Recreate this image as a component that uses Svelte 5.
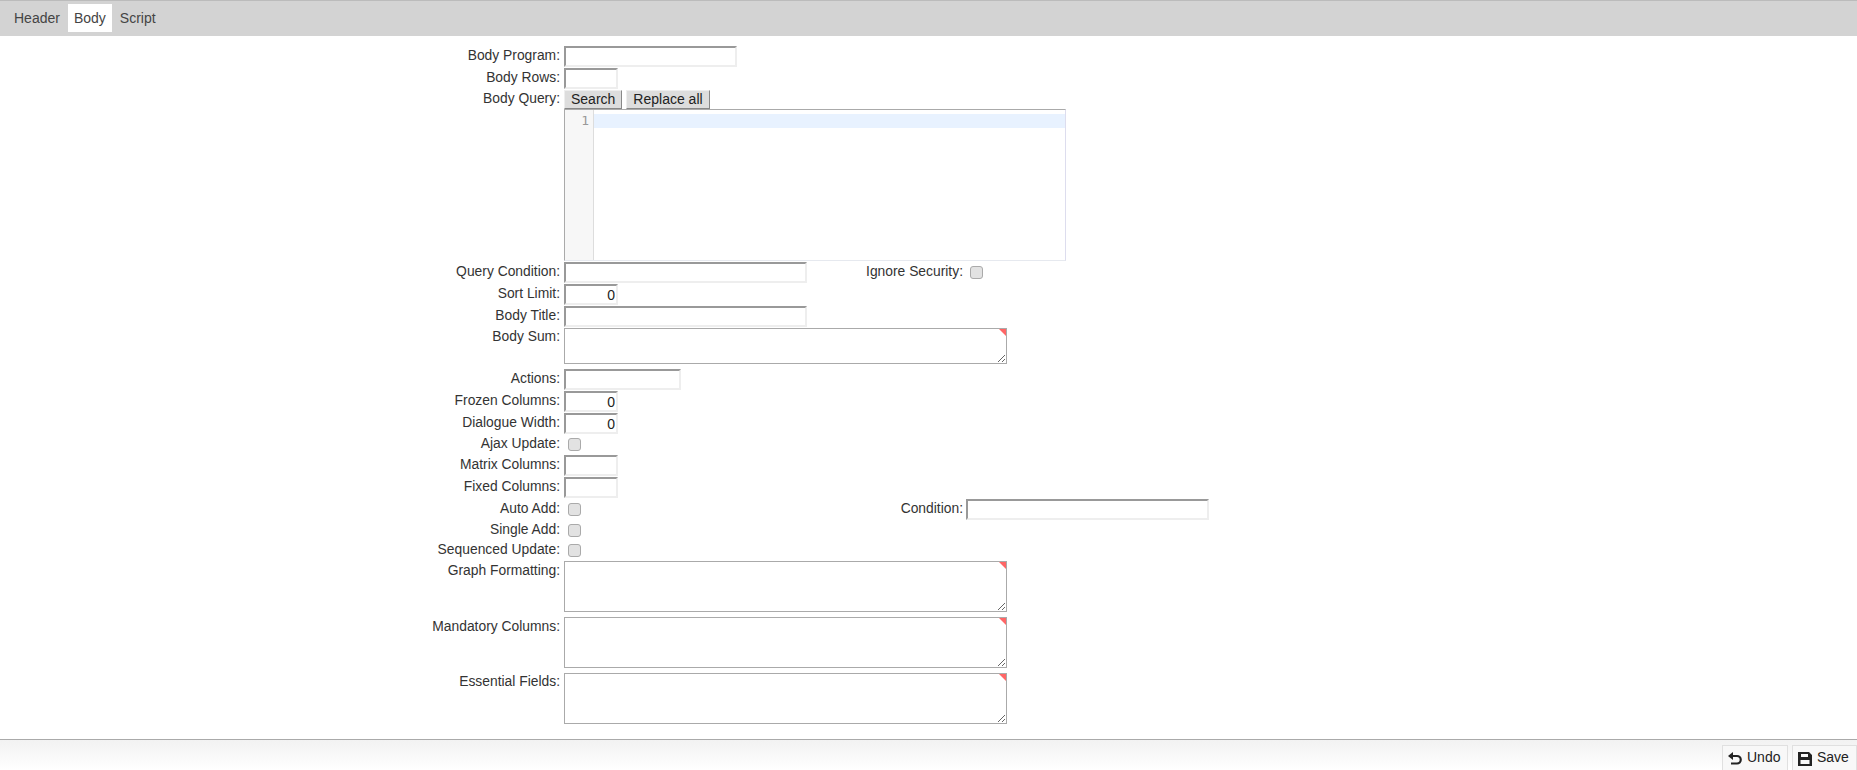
<script>
  let tabs = ["Header", "Body", "Script"];
  let activeTab = "Body";
</script>

<div class="page">
  <div class="tabs">
    {#each tabs as tab}
      <button class="tab" class:active={tab === activeTab} onclick={() => (activeTab = tab)}>{tab}</button>
    {/each}
  </div>

  <div class="form">
    <div class="row"><label for="prog">Body Program:</label><input id="prog" class="w173" /></div>
    <div class="row"><label for="rows">Body Rows:</label><input id="rows" class="w54" /></div>
    <div class="row query">
      <label for="query">Body Query:</label>
      <div class="query-field">
        <div class="query-tools">
          <button class="tool">Search</button>
          <button class="tool">Replace all</button>
        </div>
        <div class="editor" id="query">
          <div class="gutter"><span>1</span></div>
          <div class="lines"><div class="active-line"></div></div>
        </div>
      </div>
    </div>
    <div class="row">
      <label for="cond">Query Condition:</label><input id="cond" class="w243" />
      <span class="side-label ignore">Ignore Security:</span><input type="checkbox" class="side-check" />
    </div>
    <div class="row"><label for="sort">Sort Limit:</label><input id="sort" class="w54 num" value="0" /></div>
    <div class="row"><label for="title">Body Title:</label><input id="title" class="w243" /></div>
    <div class="row area">
      <label for="sum">Body Sum:</label>
      <div class="area-wrap"><textarea id="sum" class="h36"></textarea><i class="corner"></i></div>
    </div>
    <div class="row"><label for="actions">Actions:</label><input id="actions" class="w117" /></div>
    <div class="row"><label for="frozen">Frozen Columns:</label><input id="frozen" class="w54 num" value="0" /></div>
    <div class="row"><label for="width">Dialogue Width:</label><input id="width" class="w54 num" value="0" /></div>
    <div class="row check"><label for="ajax">Ajax Update:</label><input id="ajax" type="checkbox" /></div>
    <div class="row"><label for="matrix">Matrix Columns:</label><input id="matrix" class="w54" /></div>
    <div class="row"><label for="fixed">Fixed Columns:</label><input id="fixed" class="w54" /></div>
    <div class="row auto">
      <label for="auto">Auto Add:</label><input id="auto" type="checkbox" />
      <span class="side-label cond">Condition:</span><input class="w243" />
    </div>
    <div class="row check"><label for="single">Single Add:</label><input id="single" type="checkbox" /></div>
    <div class="row check"><label for="seq">Sequenced Update:</label><input id="seq" type="checkbox" /></div>
    <div class="row area low">
      <label for="graph">Graph Formatting:</label>
      <div class="area-wrap"><textarea id="graph"></textarea><i class="corner"></i></div>
    </div>
    <div class="row area low">
      <label for="mand">Mandatory Columns:</label>
      <div class="area-wrap"><textarea id="mand"></textarea><i class="corner"></i></div>
    </div>
    <div class="row area">
      <label for="ess">Essential Fields:</label>
      <div class="area-wrap"><textarea id="ess"></textarea><i class="corner"></i></div>
    </div>
  </div>

  <div class="footer">
    <button class="foot-btn undo">
      <svg class="icon" width="14" height="13" viewBox="0 0 14 13">
        <path d="M0 4 L5 0 V8 z" fill="#222"/>
        <path d="M4 4 H9 a3.750 3.750 0 0 1 0 7.500 H3" fill="none" stroke="#222" stroke-width="2.200"/>
      </svg>
      Undo
    </button>
    <button class="foot-btn save">
      <svg class="icon" width="14" height="14" viewBox="0 0 14 14"><path fill-rule="evenodd" d="M0 0h11l3 3v11H0zM3 2v3h7V2zM2.500 8v4h9V8z" fill="#222"/></svg>
      Save
    </button>
  </div>
</div>

<style>
  :global(body) {
    margin: 0;
    background: #fff;
    font-family: "Liberation Sans", Arial, sans-serif;
    font-size: 14px;
    color: #333;
  }
  .page {
    height: 770px;
    display: flex;
    flex-direction: column;
    overflow: hidden;
  }
  .tabs {
    box-sizing: border-box;
    display: flex;
    align-items: flex-start;
    gap: 2px;
    background: #d3d3d3;
    border-top: 1px solid #bbb;
    padding: 3px 8px 0 8px;
    height: 36px;
  }
  .tab {
    height: 28px;
    border: 0;
    padding: 0 6px;
    background: none;
    font: 14px "Liberation Sans", Arial, sans-serif;
    color: #444;
  }
  .tab.active {
    background: #fff;
  }
  .form {
    flex: 1;
    padding-top: 10px;
  }
  .row {
    display: flex;
    align-items: flex-start;
    margin-bottom: 1px;
    min-height: 21px;
  }
  label {
    width: 560px;
    flex: none;
    text-align: right;
    margin-right: 4px;
    font-size: 13.85px;
    line-height: 16px;
    padding-top: 1px;
    color: #333;
  }
  .query label,
  .area label,
  .check label {
    padding-top: 0;
  }
  .area.low label {
    padding-top: 1px;
  }
  input:not([type="checkbox"]) {
    box-sizing: border-box;
    height: 21px;
    padding: 1px;
    margin: 0;
    border: 2px solid;
    border-color: #999 #eee #eee #999;
    background: #fff;
    font: 14px "Liberation Sans", Arial, sans-serif;
    color: #222;
    outline: 0;
  }
  .w54 { width: 54px; }
  .w117 { width: 117px; }
  .w173 { width: 173px; }
  .w243 { width: 243px; }
  .num { text-align: right; }
  input[type="checkbox"] {
    appearance: none;
    box-sizing: border-box;
    flex: none;
    width: 13px;
    height: 13px;
    margin: 4px 0 0 4px;
    background: #e2e2e2;
    border: 1px solid #aaa;
    border-radius: 3px;
  }
  .row.check {
    min-height: 20px;
    margin-bottom: 0;
  }
  .row.check input[type="checkbox"] {
    margin-top: 3px;
  }
  .side-label {
    flex: none;
    box-sizing: border-box;
    text-align: right;
    font-size: 13.85px;
    line-height: 16px;
    padding-top: 1px;
    color: #333;
  }
  .ignore { width: 156px; }
  .side-check { margin-left: 7px !important; }
  .cond { width: 382px; margin-right: 3px; }
  .query-tools {
    display: flex;
    gap: 4px;
    height: 19px;
  }
  .tool {
    box-sizing: border-box;
    height: 19px;
    padding: 0 6px 2px;
    background: #ddd;
    border: 1px solid;
    border-color: #eee #888 #888 #eee;
    font: 14px "Liberation Sans", Arial, sans-serif;
    color: #222;
  }
  .editor {
    box-sizing: border-box;
    width: 502px;
    height: 152px;
    display: flex;
    border: 1px solid;
    border-color: #aaa #dde #e6e9ef #aaa;
  }
  .gutter {
    width: 29px;
    flex: none;
    box-sizing: border-box;
    background: #f7f7f7;
    border-right: 1px solid #ddd;
    text-align: right;
    padding: 3px 4px 0 0;
    font: 13px/15px "DejaVu Sans Mono", monospace;
    color: #999;
  }
  .lines {
    flex: 1;
    padding-top: 4px;
  }
  .active-line {
    height: 14px;
    background: #e8f2ff;
  }
  .area-wrap {
    position: relative;
    display: flex;
  }
  textarea {
    box-sizing: border-box;
    width: 443px;
    height: 51px;
    margin: 0;
    padding: 2px;
    border: 1px solid #aaa;
    background: #fff;
    outline: 0;
  }
  .row.area { margin-bottom: 5px; }
  .h36 { height: 36px; }
  .corner {
    position: absolute;
    top: 1px;
    right: 1px;
    width: 0;
    height: 0;
    border-top: 7px solid #f66;
    border-left: 7px solid transparent;
  }
  .footer {
    height: 31px;
    box-sizing: border-box;
    display: flex;
    justify-content: flex-end;
    align-items: flex-end;
    gap: 4px;
    border-top: 1px solid #aaa;
    background: linear-gradient(#f2f2f2, #fff);
  }
  .foot-btn {
    box-sizing: border-box;
    height: 25px;
    display: flex;
    align-items: center;
    gap: 5px;
    padding: 0 5px 2px;
    border: 1px solid #e0e0e0;
    border-bottom: 0;
    background: #f8f8f8;
    font: 14px "Liberation Sans", Arial, sans-serif;
    color: #222;
  }
  .icon {
    flex: none;
    margin-top: 3px;
  }
  .undo { width: 66px; }
  .save { width: 65px; }
</style>
